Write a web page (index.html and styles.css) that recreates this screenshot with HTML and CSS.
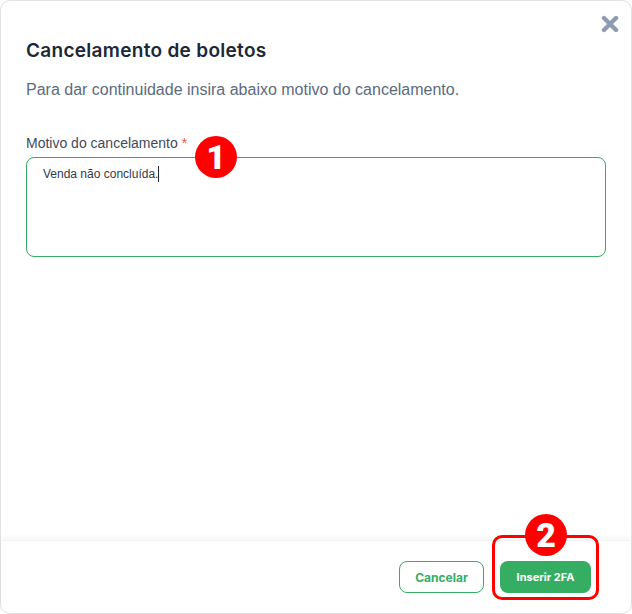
FILE: index.html
```html
<!DOCTYPE html>
<html lang="pt-BR">
<head>
    <meta charset="UTF-8">
    <title>Cancelamento de boletos</title>
    <link rel="stylesheet" href="styles.css">
</head>
<body>
    <div class="modal">
        <button class="close" aria-label="Fechar">
            <svg width="18" height="18" viewBox="0 0 18 18">
                <path d="M3 3L15 15M15 3L3 15" stroke="#8e9cb2" stroke-width="4.4" stroke-linecap="round"/>
            </svg>
        </button>

        <div class="modal-body">
            <h1>Cancelamento de boletos</h1>
            <p class="intro">Para dar continuidade insira abaixo motivo do cancelamento.</p>

            <label class="field-label">Motivo do cancelamento <span class="required">*</span></label>
            <div class="textarea">Venda não concluída.<span class="caret"></span></div>
        </div>

        <div class="modal-footer">
            <button class="btn btn-outline">Cancelar</button>
            <button class="btn btn-primary">Inserir 2FA</button>
        </div>

        <!-- marcações do print -->
        <span class="marker marker-one">1</span>
        <span class="highlight"></span>
        <span class="marker marker-two">2</span>
    </div>
</body>
</html>
```

FILE: styles.css
```css
* {
    box-sizing: border-box;
}

html, body {
    height: 100%;
}

body {
    margin: 0;
    background-color: #fff;
    font-family: 'Liberation Sans', Arial, sans-serif;
}

.modal {
    position: relative;
    display: flex;
    flex-direction: column;
    height: 100%;
    background-color: #fff;
    border: 1px solid #e2e2e2;
    border-radius: 10px;
}

.close {
    position: absolute;
    top: 14px;
    right: 12px;
    padding: 0;
    border: none;
    background: none;
    line-height: 0;
}

.modal-body {
    flex: 1;
    padding: 38px 25px 0;
}

h1 {
    margin: 0;
    color: #1c2837;
    font-family: 'Inter', sans-serif;
    font-size: 19px;
    font-weight: 600;
    letter-spacing: 0.3px;
    line-height: 24px;
}

.intro {
    margin: 16px 0 0;
    color: #5d6b7e;
    font-size: 16px;
    line-height: 22px;
}

.field-label {
    display: block;
    margin-top: 33px;
    color: #3f4a5a;
    font-size: 14px;
    line-height: 18px;
}

.required {
    color: #f0524f;
}

.textarea {
    height: 100px;
    margin-top: 5px;
    padding: 8px 16px;
    border: 1px solid #35ad62;
    border-radius: 8px;
    color: #2f3a4a;
    font-size: 12px;
    line-height: 16px;
}

.caret {
    display: inline-block;
    width: 1px;
    height: 16px;
    vertical-align: top;
    background-color: #1c2837;
}

.modal-footer {
    display: flex;
    justify-content: flex-end;
    gap: 16px;
    height: 73px;
    padding: 20px 40px 0 0;
    border-top: 1px solid #f0f1f3;
    box-shadow: 0 -3px 4px rgba(30, 40, 60, 0.04);
}

.btn {
    width: 85px;
    height: 32px;
    padding: 0;
    border-radius: 8px;
    font-family: 'Inter', sans-serif;
    font-size: 12px;
    font-weight: 700;
}

.btn-outline {
    border: 1px solid #35ad62;
    background-color: #fff;
    color: #35ad62;
}

.btn-primary {
    width: 91px;
    border: none;
    background-color: #35ad62;
    color: #fff;
    font-size: 11px;
}

.marker {
    position: absolute;
    width: 42px;
    height: 42px;
    border-radius: 50%;
    background-color: #fe0000;
    color: #fff;
    font-family: 'Roboto', sans-serif;
    font-size: 34px;
    font-weight: 900;
    line-height: 42px;
    text-align: center;
}

.marker-one {
    top: 135px;
    left: 194px;
}

.marker-two {
    top: 513px;
    left: 524px;
}

.highlight {
    position: absolute;
    top: 534px;
    left: 491px;
    width: 107px;
    height: 65px;
    border: 3px solid #fe0000;
    border-radius: 10px;
}
```
